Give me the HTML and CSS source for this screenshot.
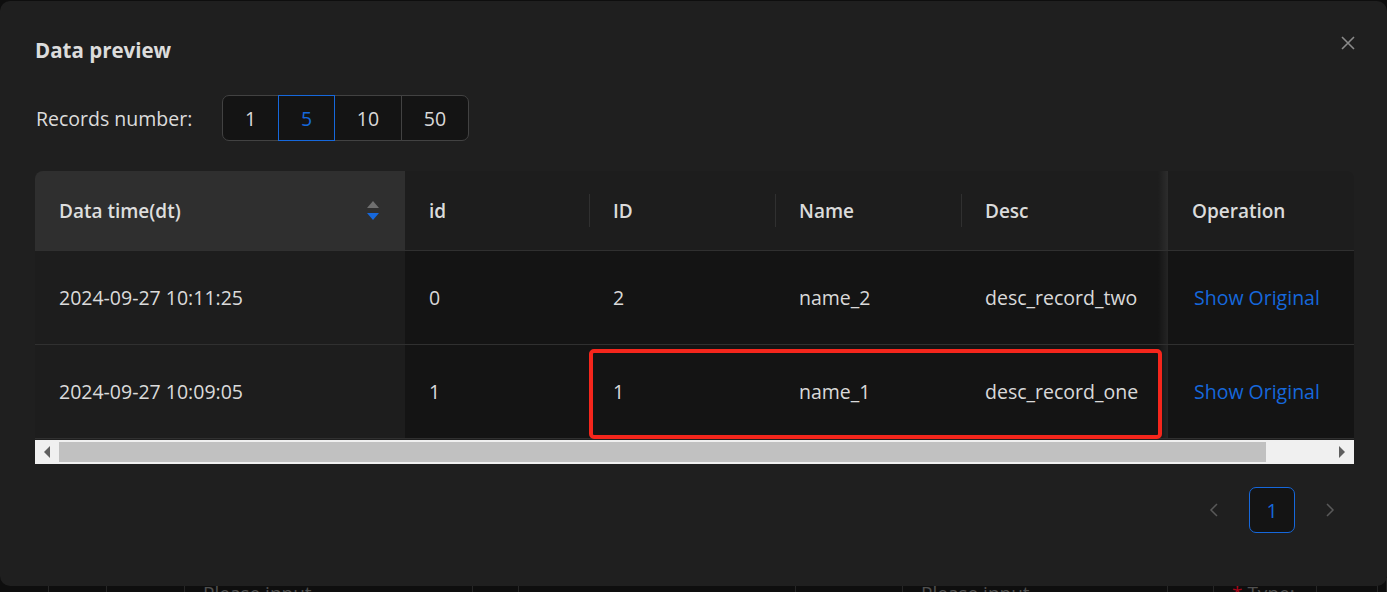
FILE: index.html
```html
<!DOCTYPE html>
<html lang="en">
<head>
<meta charset="utf-8">
<title>Data preview</title>
<link rel="stylesheet" href="styles.css">
</head>
<body>
<div class="page">
  <div class="bg-row">
    <span class="bg-cell w49"></span>
    <span class="bg-cell w58"></span>
    <span class="bg-cell w78"></span>
    <span class="bg-cell w288 txt">Please input</span>
    <span class="bg-cell w46"></span>
    <span class="bg-cell w277"></span>
    <span class="bg-cell w107"></span>
    <span class="bg-cell w265 txt">Please input</span>
    <span class="bg-cell w46"></span>
    <span class="bg-cell w103 txt"><span class="req">*</span> Type:</span>
    <span class="bg-cell w61"></span>
    <span class="bg-cell w9"></span>
  </div>
</div>

<div class="modal">
  <button class="close" aria-label="Close">
    <svg width="14" height="14" viewBox="0 0 14 14"><path d="M1 1 L13 13 M13 1 L1 13" stroke="#8a8a8a" stroke-width="1.6" fill="none"/></svg>
  </button>
  <h2 class="title">Data preview</h2>

  <div class="records">
    <span class="records-label">Records number:</span>
    <div class="seg">
      <span class="seg-item w57">1</span>
      <span class="seg-item w57 active">5</span>
      <span class="seg-item w68">10</span>
      <span class="seg-item w68 last">50</span>
    </div>
  </div>

  <div class="table-wrap">
    <table class="tbl">
      <colgroup>
        <col class="c1"><col class="c2"><col class="c3"><col class="c4"><col class="c5"><col class="c6">
      </colgroup>
      <thead>
        <tr>
          <th class="sorted first">
            <div class="th-inner">
              <span>Data time(dt)</span>
              <span class="sorter"><span class="up"></span><span class="down"></span></span>
            </div>
          </th>
          <th>id</th>
          <th class="sep">ID</th>
          <th class="sep">Name</th>
          <th class="sep">Desc</th>
          <th class="fixed last">Operation</th>
        </tr>
      </thead>
      <tbody>
        <tr>
          <td class="sorted">2024-09-27 10:11:25</td>
          <td>0</td>
          <td>2</td>
          <td>name_2</td>
          <td>desc_record_two</td>
          <td class="fixed"><a class="link">Show Original</a></td>
        </tr>
        <tr>
          <td class="sorted">2024-09-27 10:09:05</td>
          <td>1</td>
          <td>1</td>
          <td>name_1</td>
          <td>desc_record_one</td>
          <td class="fixed"><a class="link">Show Original</a></td>
        </tr>
      </tbody>
    </table>
    <div class="scrollbar">
      <span class="sb-btn"><span class="arrow-left"></span></span>
      <span class="sb-thumb"></span>
      <span class="sb-track"></span>
      <span class="sb-btn"><span class="arrow-right"></span></span>
    </div>
    <div class="highlight"></div>
  </div>

  <div class="pagination">
    <span class="pg-btn">
      <svg width="10" height="14" viewBox="0 0 10 14"><path d="M8 1 L2 7 L8 13" stroke="#595959" stroke-width="1.5" fill="none"/></svg>
    </span>
    <span class="pg-btn pg-active">1</span>
    <span class="pg-btn">
      <svg width="10" height="14" viewBox="0 0 10 14"><path d="M2 1 L8 7 L2 13" stroke="#595959" stroke-width="1.5" fill="none"/></svg>
    </span>
  </div>
</div>
</body>
</html>
```

FILE: styles.css
```css
* { box-sizing: border-box; }

html, body {
  margin: 0;
  padding: 0;
}

body {
  width: 1387px;
  height: 592px;
  overflow: hidden;
  background: #0e0e0e;
  font-family: "Open Sans", "Noto Sans", sans-serif;
  font-size: 19.5px;
  color: rgba(255, 255, 255, 0.85);
  position: relative;
}

/* background page underneath the modal */
.page {
  padding-top: 578px;
}

.bg-row {
  display: flex;
  height: 30px;
  line-height: 30px;
  color: #505050;
  font-size: 19px;
}

.bg-cell {
  display: block;
  border-right: 1px solid #262626;
  white-space: nowrap;
  overflow: hidden;
}

.bg-cell.txt { padding-left: 18px; }
.req { color: #a8071a; }

.w9 { width: 9px; }
.w46 { width: 46px; }
.w49 { width: 49px; }
.w58 { width: 58px; }
.w61 { width: 61px; }
.w78 { width: 78px; }
.w103 { width: 103px; }
.w107 { width: 107px; }
.w265 { width: 265px; }
.w277 { width: 277px; }
.w288 { width: 288px; }

/* modal */
.modal {
  position: absolute;
  top: 1px;
  left: 0;
  width: 1387px;
  height: 585px;
  background: #1f1f1f;
  border-radius: 10px;
  padding: 35px 33px 0 35px;
}

.close {
  position: absolute;
  top: 35px;
  right: 32px;
  width: 14px;
  height: 14px;
  padding: 0;
  border: 0;
  background: transparent;
  display: flex;
}

.title {
  margin: 0;
  padding-left: 0;
  font-size: 20.5px;
  font-weight: 700;
  line-height: 28px;
  color: rgba(255, 255, 255, 0.85);
}

.records {
  margin-top: 31px;
  display: flex;
  align-items: center;
  height: 46px;
}

.records-label {
  flex: 0 0 187px;
  padding-left: 1px;
  color: rgba(255, 255, 255, 0.85);
}

.seg {
  display: flex;
  height: 46px;
}

.seg-item {
  display: flex;
  align-items: center;
  justify-content: center;
  height: 46px;
  border: 1px solid #424242;
  background: #141414;
  color: rgba(255, 255, 255, 0.85);
  margin-left: -1px;
}

.seg-item:first-child {
  margin-left: 0;
  border-radius: 7px 0 0 7px;
}

.seg-item.last {
  border-radius: 0 7px 7px 0;
}

.seg-item.active {
  position: relative;
  z-index: 1;
  border-color: #1668dc;
  color: #1668dc;
}

.w57 { width: 57px; }
.w68 { width: 68px; }

/* table */
.table-wrap {
  margin-top: 30px;
  position: relative;
  width: 1319px;
}

.tbl {
  width: 1319px;
  table-layout: fixed;
  border-collapse: separate;
  border-spacing: 0;
}

.c1 { width: 370px; }
.c2 { width: 184px; }
.c3 { width: 186px; }
.c4 { width: 186px; }
.c5 { width: 207px; }
.c6 { width: 186px; }

.tbl th {
  height: 80px;
  padding: 0 24px;
  text-align: left;
  font-size: 19px;
  font-weight: 600;
  color: rgba(255, 255, 255, 0.85);
  background: #1d1d1d;
  border-bottom: 1px solid #303030;
  position: relative;
  white-space: nowrap;
}

.tbl th.sorted { background: #2f2f2f; }
.tbl th.first { border-top-left-radius: 8px; }
.tbl th.last { border-top-right-radius: 8px; }

.tbl th.sep::before {
  content: "";
  position: absolute;
  left: 0;
  top: 23px;
  width: 1px;
  height: 33px;
  background: #303030;
}

.th-inner {
  display: flex;
  align-items: center;
  justify-content: space-between;
  padding-right: 2px;
}

.sorter {
  display: flex;
  flex-direction: column;
  gap: 5px;
}

.sorter .up {
  width: 0;
  height: 0;
  border-left: 6px solid transparent;
  border-right: 6px solid transparent;
  border-bottom: 7px solid #6f6f6f;
}

.sorter .down {
  width: 0;
  height: 0;
  border-left: 6px solid transparent;
  border-right: 6px solid transparent;
  border-top: 7px solid #1668dc;
}

.tbl td {
  height: 94px;
  padding: 0 24px;
  background: #141414;
  border-bottom: 1px solid #303030;
  color: rgba(255, 255, 255, 0.85);
  white-space: nowrap;
  position: relative;
}

.tbl td.sorted { background: #1d1d1d; }

.tbl .fixed::after {
  content: "";
  position: absolute;
  left: -10px;
  top: 0;
  bottom: 0;
  width: 10px;
  background: linear-gradient(to right, rgba(255, 255, 255, 0), rgba(255, 255, 255, 0.07));
}

.link {
  color: #1668dc;
  text-decoration: none;
  padding-left: 2px;
}

/* fake native scrollbar */
.scrollbar {
  display: flex;
  height: 24px;
  margin-top: 1px;
  background: #f0f0f0;
}

.sb-btn {
  flex: 0 0 24px;
  display: flex;
  align-items: center;
  justify-content: center;
}

.arrow-left {
  width: 0;
  height: 0;
  border-top: 6px solid transparent;
  border-bottom: 6px solid transparent;
  border-right: 6px solid #5f5f5f;
}

.arrow-right {
  width: 0;
  height: 0;
  border-top: 6px solid transparent;
  border-bottom: 6px solid transparent;
  border-left: 6px solid #5f5f5f;
}

.sb-thumb {
  flex: 0 0 1207px;
  margin: 2px 0;
  background: #c1c1c1;
}

.sb-track { flex: 1; }

/* annotation */
.highlight {
  position: absolute;
  left: 554px;
  top: 178px;
  width: 573px;
  height: 90px;
  border: 4px solid #f5261c;
  border-radius: 5px;
}

/* pagination */
.pagination {
  margin-top: 23px;
  display: flex;
  justify-content: flex-end;
  gap: 12px;
  padding-right: 1px;
}

.pg-btn {
  width: 46px;
  height: 46px;
  display: flex;
  align-items: center;
  justify-content: center;
  border-radius: 7px;
  color: rgba(255, 255, 255, 0.85);
}

.pg-active {
  border: 1px solid #1668dc;
  background: #141414;
  color: #1668dc;
}
```
